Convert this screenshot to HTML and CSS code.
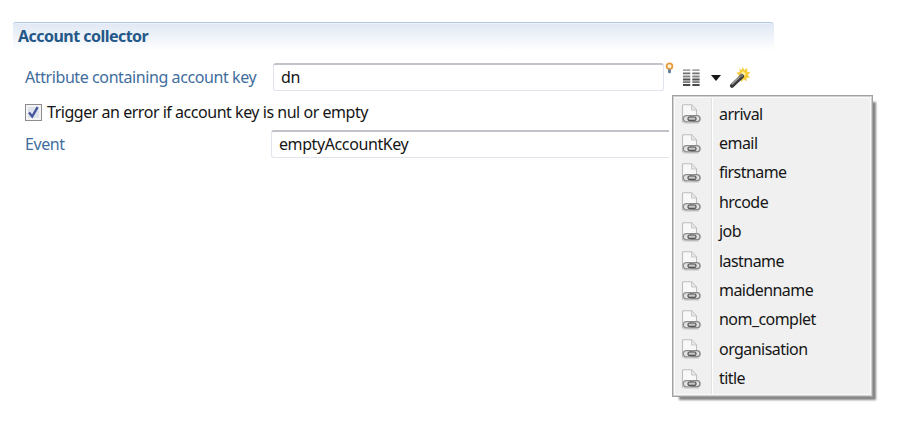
FILE: index.html
```
<!DOCTYPE html>
<html lang="en">
<head>
<meta charset="utf-8">
<title>Account collector</title>
<link rel="stylesheet" href="styles.css">
</head>
<body>
<svg width="0" height="0" class="defs">
  <defs>
    <symbol id="doc" viewBox="0 0 20 20">
      <path d="M1.5 18V1.5Q1.5 .8 2.5 .8H10.5L15.5 6V18Z" fill="#f8f8f8" stroke="#bdbdbd" stroke-width="1.1"/>
      <path d="M10.5 1V6H15.5" fill="#e6e6e6" stroke="#c8c8c8"/>
      <rect x="2.3" y="11.6" width="10" height="6.2" rx="3" fill="#e2e2e2" stroke="#8e8e8e" stroke-width="1.3"/>
      <rect x="9.2" y="11.6" width="9.8" height="6.2" rx="3" fill="#e2e2e2" stroke="#868686" stroke-width="1.4"/>
      <rect x="7" y="13" width="8" height="3.4" rx="1.4" fill="#c5c5c5" stroke="#555" stroke-width="1.2"/>
      <path d="M3 19H18" stroke="#c4c4c4"/>
    </symbol>
  </defs>
</svg>
<main class="section">
  <h1 class="header">Account collector</h1>
  <div class="row first">
    <label class="label">Attribute containing account key</label>
    <div class="field">dn</div>
    <svg class="bulb" width="9" height="13" viewBox="0 0 9 13"><circle cx="4.5" cy="4.2" r="2.9" fill="#fff3d8" stroke="#e79a3f" stroke-width="1.8"/><path d="M3 7.5H6V10.5L4.5 11.5L3 10.5Z" fill="#667f9c"/></svg>
    <svg class="columns" width="18" height="17" viewBox="0 0 18 17"><g fill="none" stroke-width="1.8"><path d="M0 1.2H7.3M9.3 1.2H16.6" stroke="#a5a5a5"/><path d="M0 4.4H7.3M9.3 4.4H16.6" stroke="#707070"/><path d="M0 7.5H7.3M9.3 7.5H16.6" stroke="#858585"/><path d="M0 10.5H7.3M9.3 10.5H16.6" stroke="#505050"/><path d="M0 13.2H7.3M9.3 13.2H16.6" stroke="#777"/><path d="M0 16H7.3M9.3 16H16.6" stroke="#4b4b4b"/></g></svg>
    <svg class="arrow" width="10" height="6" viewBox="0 0 10 6"><path d="M0 0H10L5 6Z" fill="#171717"/></svg>
    <svg class="wand" width="22" height="22" viewBox="0 0 22 22"><path d="M13.5 0L15.3 3.1L18.5 1.1L18 4.7L21.3 5.2L18.8 8L21 10.8L17.5 10.7L17.7 14.3L14.7 12.3L12.3 15L11.5 11.4L8 11.2L10 8.2L7.3 5.7L10.8 5.1L10.3 1.6L12.7 3.2Z" fill="#f7cc38"/><path d="M14 4L17 7L14 10L11 7Z" fill="#fff0a0"/><path d="M3 18.8L13 9.2" stroke="#393939" stroke-width="4.2" stroke-linecap="round"/><path d="M2.8 17.5L12.3 8.5" stroke="#a5a5a5" stroke-width="1.2"/><path d="M11 9.6L13.4 7.4" stroke="#777" stroke-width="3"/></svg>
  </div>
  <div class="row check">
    <span class="box"><svg width="17" height="17" viewBox="0 0 17 17"><path d="M4 8.5L7.2 12.5L12.6 3.2" fill="none" stroke="#42549b" stroke-width="2.3"/></svg></span>
    <span class="trigger">Trigger an error if account key is nul or empty</span>
  </div>
  <div class="row event">
    <label class="label">Event</label>
    <div class="field">emptyAccountKey</div>
  </div>
</main>
<div class="menu">
  <div class="item"><svg><use href="#doc"/></svg><span>arrival</span></div>
  <div class="item"><svg><use href="#doc"/></svg><span>email</span></div>
  <div class="item"><svg><use href="#doc"/></svg><span>firstname</span></div>
  <div class="item"><svg><use href="#doc"/></svg><span>hrcode</span></div>
  <div class="item"><svg><use href="#doc"/></svg><span>job</span></div>
  <div class="item"><svg><use href="#doc"/></svg><span>lastname</span></div>
  <div class="item"><svg><use href="#doc"/></svg><span>maidenname</span></div>
  <div class="item"><svg><use href="#doc"/></svg><span>nom_complet</span></div>
  <div class="item"><svg><use href="#doc"/></svg><span>organisation</span></div>
  <div class="item"><svg><use href="#doc"/></svg><span>title</span></div>
</div>
</body>
</html>
```
FILE: styles.css
```
* { box-sizing: border-box; }
body {
  margin: 0;
  height: 421px;
  overflow: hidden;
  background: #fff;
  color: #161616;
  font: 16px/22px "Noto Sans", sans-serif;
  letter-spacing: -0.55px;
  white-space: nowrap;
}
.defs { position: absolute; }
.section { padding: 22px 0 0 13px; }
.header {
  width: 761px;
  height: 29px;
  margin: 0;
  padding: 2px 5px;
  border-top: 1px solid #afc8e3;
  border-radius: 3px 4px 0 0;
  background: linear-gradient(#e0e8f4, #fff);
  box-shadow: inset 0 1px #edf3fa;
  color: #235889;
  font-size: 16px;
  line-height: 22px;
  font-weight: 700;
  letter-spacing: -0.53px;
}
.row { display: flex; align-items: center; padding-left: 12px; }
.first { height: 27px; margin-top: 12px; }
.label { width: 248px; flex: none; color: #416d9d; letter-spacing: -0.41px; }
.field {
  width: 391px;
  height: 28px;
  flex: none;
  padding: 1px 7px;
  border: 1px solid #e0e4ed;
  border-top: 2px solid #c2c3ca;
  border-radius: 3px;
  letter-spacing: -0.4px;
}
.bulb { margin: -17px 0 0 1px; }
.columns { margin: 2px 0 0 9px; }
.arrow { margin: 2px 0 0 10px; }
.wand { margin: 2px 0 0 8px; }
.check { height: 22px; margin-top: 11px; }
.trigger { letter-spacing: -0.47px; }
.box {
  width: 17px;
  height: 17px;
  margin-right: 5px;
  border: 1px solid #8b8d90;
  background: #dfe3ec;
  box-shadow: inset 0 0 0 2px #f4f4f4;
}
.box svg { display: block; margin: -1px; }
.event { height: 28px; margin-top: 7px; }
.event .label { width: 246px; }
.event .field { width: 398px; border-right: 0; border-radius: 3px 0 0 3px; }
.menu {
  position: absolute;
  left: 672px;
  top: 95px;
  width: 201px;
  height: 302px;
  padding: 3px 0 0 8px;
  border: 1px solid #a2a2a2;
  background: linear-gradient(90deg, transparent 38px, #e2e2e2 38px 39px, #fff 39px 40px, transparent 40px) #f0f0f0;
  box-shadow: inset 0 0 0 1px #d0d0d0, inset 0 0 0 2px #fafafa, 5px 5px 2px -2px #858585;
}
.item { display: flex; align-items: center; height: 29.4px; }
.item svg { width: 20px; height: 20px; margin: 1px 18px 0 0; flex: none; }
```
